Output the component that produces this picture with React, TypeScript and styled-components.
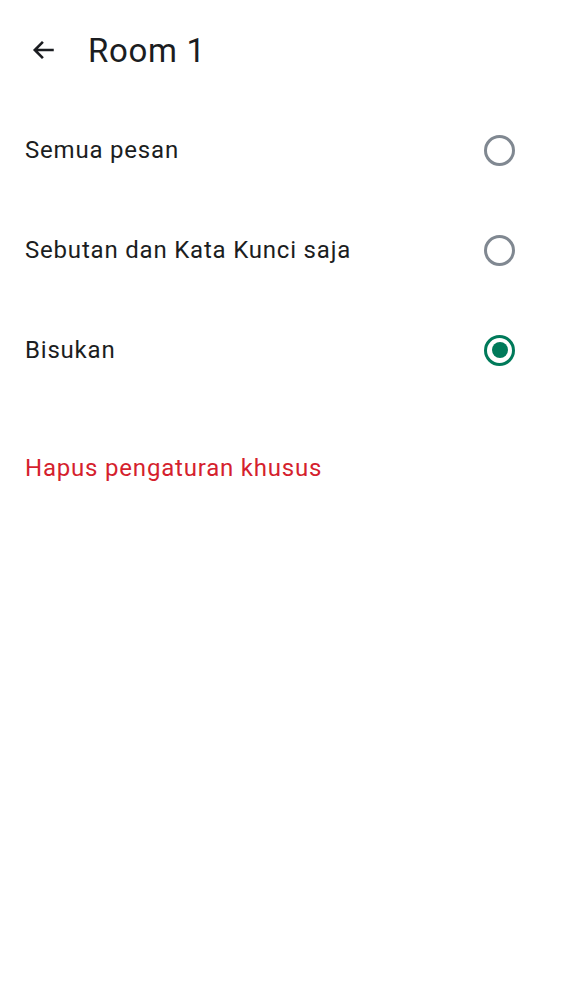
import React, { useState } from "react";
import styled, { createGlobalStyle } from "styled-components";

const GlobalStyle = createGlobalStyle`
  body {
    margin: 0;
    background: #ffffff;
    font-family: Roboto, "Noto Sans", sans-serif;
  }
`;

const Page = styled.div`
  width: 562px;
  min-height: 1000px;
  background: #ffffff;
  color: #1b1d21;
`;

const Header = styled.div`
  display: flex;
  align-items: center;
  height: 100px;
  padding-left: 29px;
  box-sizing: border-box;
`;

const BackButton = styled.button`
  display: flex;
  align-items: center;
  justify-content: center;
  width: 30px;
  height: 30px;
  padding: 0;
  border: none;
  background: none;
  margin-right: 29px;
  color: #1b1d21;
`;

const Title = styled.h1`
  margin: 0;
  font-size: 33px;
  font-weight: 400;
  letter-spacing: 0.7px;
`;

const Row = styled.label`
  display: flex;
  align-items: center;
  justify-content: space-between;
  height: 100px;
  padding: 0 47px 0 25px;
  cursor: pointer;
`;

const RowText = styled.span`
  font-size: 24px;
  letter-spacing: 0.8px;
`;

const Radio = styled.span<{ $checked: boolean }>`
  display: flex;
  align-items: center;
  justify-content: center;
  width: 31px;
  height: 31px;
  box-sizing: border-box;
  border-radius: 50%;
  border: 3px solid ${p => (p.$checked ? "#007a5a" : "#808891")};
  &::after {
    content: "";
    display: ${p => (p.$checked ? "block" : "none")};
    width: 16px;
    height: 16px;
    border-radius: 50%;
    background: #007a5a;
  }
`;

const ResetLink = styled.button`
  display: block;
  margin-top: 50px;
  padding: 0 25px;
  border: none;
  background: none;
  font-family: Roboto, "Noto Sans", sans-serif;
  font-size: 24px;
  letter-spacing: 0.8px;
  color: #d51f2e;
  line-height: 36px;
  cursor: pointer;
`;

const options = ["Semua pesan", "Sebutan dan Kata Kunci saja", "Bisukan"];

const App: React.FunctionComponent = () => {
  const [selected, setSelected] = useState<number>(2);
  return (
    <>
      <GlobalStyle />
      <Page>
        <Header>
          <BackButton aria-label="Kembali">
            <svg width="26" height="26" viewBox="0 0 24 24" fill="none">
              <path
                d="M21 12H4M11 4.5L3.5 12L11 19.5"
                stroke="currentColor"
                strokeWidth="2.4"
              />
            </svg>
          </BackButton>
          <Title>Room 1</Title>
        </Header>
        {options.map((label, i) => (
          <Row key={label} onClick={() => setSelected(i)}>
            <RowText>{label}</RowText>
            <Radio $checked={selected === i} />
          </Row>
        ))}
        <ResetLink>Hapus pengaturan khusus</ResetLink>
      </Page>
    </>
  );
};

export default App;
